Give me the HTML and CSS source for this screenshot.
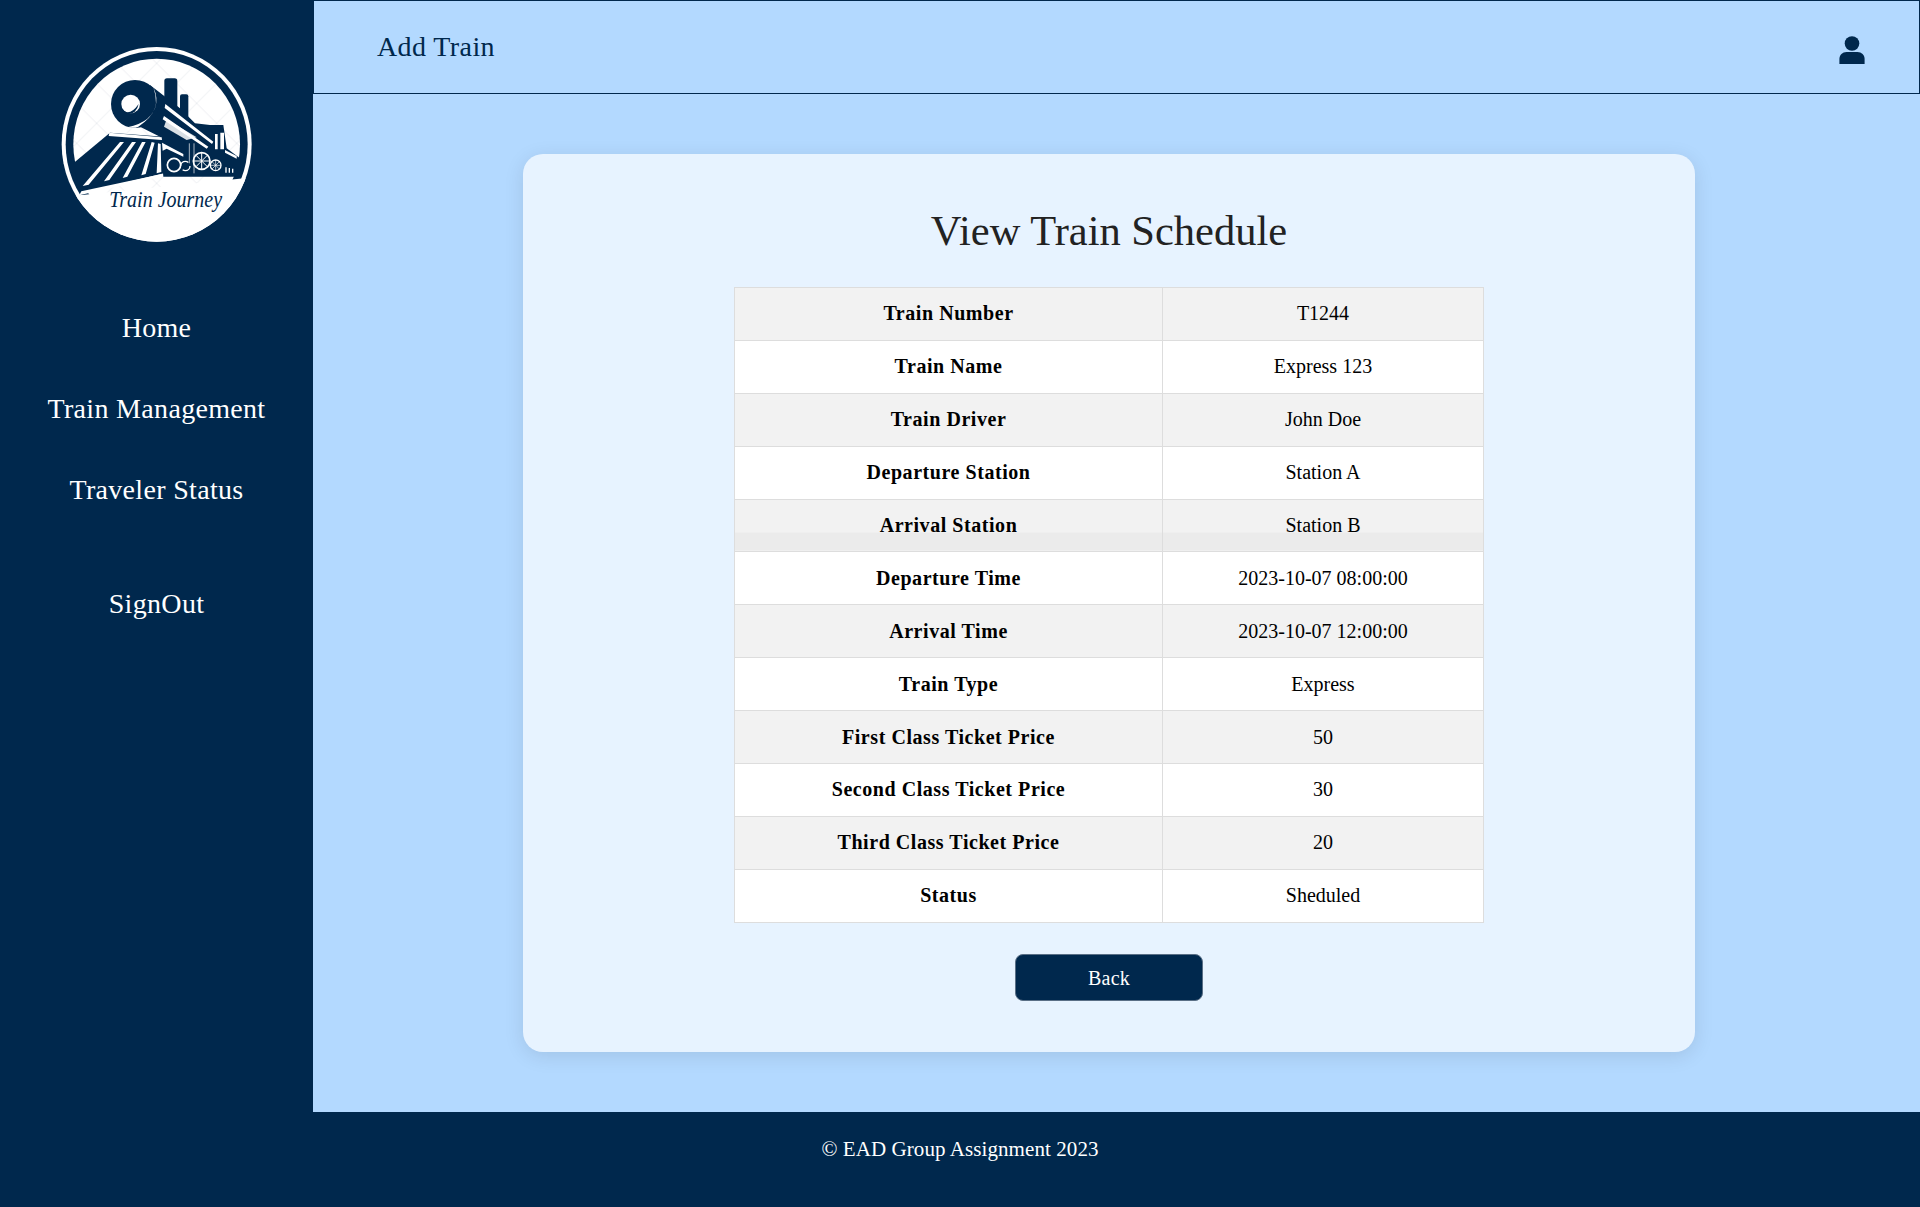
FILE: index.html
```html
<!DOCTYPE html>
<html lang="en">
<head>
<meta charset="utf-8">
<title>View Train Schedule</title>
<link rel="stylesheet" href="styles.css">
</head>
<body>
<div class="app">
  <aside class="sidebar">
    <svg class="logo" viewBox="0 0 690 690" width="230" height="230" aria-label="Train Journey logo">
      <defs>
        <pattern id="wm" width="120" height="120" patternUnits="userSpaceOnUse" patternTransform="translate(50 40)">
          <path d="M0 0L120 120M120 0L0 120" stroke="#e3e6ea" stroke-width="2" fill="none"/>
        </pattern>
        <clipPath id="disc"><ellipse cx="350" cy="343" rx="285" ry="292"/></clipPath>
      </defs>
      <ellipse cx="350" cy="343" rx="285" ry="292" fill="#fff"/>
      <ellipse cx="350" cy="343" rx="273" ry="280" fill="#00284d"/>
      <ellipse cx="350" cy="343" rx="250" ry="257" fill="#fff"/>
      <ellipse cx="350" cy="343" rx="250" ry="257" fill="url(#wm)"/>
      <path d="M100 400L210 308L372 320L372 430L122 490Z" fill="#00284d"/>
      <rect x="373" y="145" width="39" height="110" rx="8" fill="#00284d"/>
      <rect x="420" y="193" width="25" height="80" rx="6" fill="#00284d"/>
      <path d="M330 165L420 235L465 280L510 285L550 285L560 355L600 385L605 440L370 440L360 320L300 290Z" fill="#00284d"/>
      <circle cx="285" cy="222" r="72" fill="#00284d"/>
      <circle cx="272" cy="222" r="28" fill="#fff"/>
      <path d="M246 238Q268 262 296 222Q290 252 262 252Q250 250 246 238Z" fill="#00284d"/>
      <path d="M340 172Q372 240 295 290Q282 296 262 292Q340 276 348 220Q348 194 340 172Z" fill="#fff"/>
      <path d="M376 222L520 335L516 342L374 234Z M372 258L505 350L500 356L368 268Z" fill="#fff"/>
      <path d="M380 268L470 322L440 330L372 290Z" fill="#fff" opacity=".85"/>
      <path d="M525 312h8v46h-8Z M541 308h11v50h-11Z" fill="#fff"/>
      <path d="M555 360L590 378L590 386L555 368Z" fill="#fff"/>
      <path d="M208 308L365 322L366 330L206 318Z" fill="#fff"/>
      <path d="M240 336L252 336L146 464L128 468Z M276 336L288 336L208 450L192 454Z M306 336L317 336L262 440L248 444Z M335 336L344 338L317 432L304 436Z M354 340L362 342L364 426L350 430Z" fill="#fff"/>
      <path d="M366 432L368 438L118 496L124 484Z" fill="#fff"/>
      <path d="M366 338L430 372L430 380L380 356L368 362Z" fill="#fff"/>
      <circle cx="402" cy="405" r="20" fill="none" stroke="#fff" stroke-width="5"/>
      <circle cx="436" cy="408" r="14" fill="none" stroke="#fff" stroke-width="4" stroke-dasharray="30 14"/>
      <circle cx="485" cy="393" r="25" fill="#00284d" stroke="#fff" stroke-width="5"/>
      <path d="M485 369V417M461 393H509M468 376L502 410M502 376L468 410" stroke="#fff" stroke-width="3"/>
      <circle cx="527" cy="406" r="16" fill="#00284d" stroke="#fff" stroke-width="4"/>
      <path d="M527 390V422M511 406H543M516 395L538 417M538 395L516 417" stroke="#fff" stroke-width="2"/>
      <path d="M558 412v16M568 414v14M578 416v12" stroke="#fff" stroke-width="4"/>
      <path d="M462 340v90M448 340v60" stroke="#fff" stroke-width="2"/>
      <path d="M100 492L118 496L620 444L660 444L660 660L60 660L60 480Z" fill="#fff" clip-path="url(#disc)"/>
      <text x="208" y="530" class="logo-text" textLength="338" lengthAdjust="spacingAndGlyphs">Train Journey</text>
    </svg>
    <nav class="nav">
      <a class="nav-link">Home</a>
      <a class="nav-link">Train Management</a>
      <a class="nav-link">Traveler Status</a>
      <a class="nav-link nav-signout">SignOut</a>
    </nav>
  </aside>
  <div class="main">
    <header class="topbar">
      <span class="topbar-title">Add Train</span>
      <svg class="user-icon" viewBox="0 0 26 28" width="26" height="28" aria-label="User"><circle cx="13" cy="7.5" r="7.3" fill="#00284d"/><path d="M0.4 28V23C0.4 19 3.5 16 7.5 16H18.5C22.5 16 25.6 19 25.6 23V28Z" fill="#00284d"/></svg>
    </header>
    <main class="content">
      <section class="card">
        <h1 class="card-title">View Train Schedule</h1>
        <table class="schedule">
          <tbody>
            <tr><th>Train Number</th><td>T1244</td></tr>
            <tr><th>Train Name</th><td>Express 123</td></tr>
            <tr><th>Train Driver</th><td>John Doe</td></tr>
            <tr><th>Departure Station</th><td>Station A</td></tr>
            <tr class="row-strip"><th>Arrival Station</th><td>Station B</td></tr>
            <tr><th>Departure Time</th><td>2023-10-07 08:00:00</td></tr>
            <tr><th>Arrival Time</th><td>2023-10-07 12:00:00</td></tr>
            <tr><th>Train Type</th><td>Express</td></tr>
            <tr><th>First Class Ticket Price</th><td>50</td></tr>
            <tr><th>Second Class Ticket Price</th><td>30</td></tr>
            <tr><th>Third Class Ticket Price</th><td>20</td></tr>
            <tr><th>Status</th><td>Sheduled</td></tr>
          </tbody>
        </table>
        <button class="back-btn" type="button">Back</button>
      </section>
    </main>
  </div>
</div>
<footer class="footer">© EAD Group Assignment 2023</footer>
</body>
</html>
```
FILE: styles.css
```css
* { box-sizing: border-box; }
html, body { margin: 0; height: 100%; }
body {
  font-family: "Liberation Serif", "Times New Roman", serif;
  background: #b3d9ff;
  color: #000;
  height: 1207px;
  display: flex;
  flex-direction: column;
  overflow: hidden;
}
.app { display: flex; flex: 1; min-height: 0; }
.sidebar {
  width: 313px;
  flex: none;
  background: #00284d;
  display: flex;
  flex-direction: column;
  align-items: center;
  padding-top: 30px;
}
.logo { display: block; align-self: flex-start; margin-left: 40px; }
.logo-text {
  font-family: "Liberation Serif", serif;
  font-style: italic;
  font-size: 72px;
  fill: #00284d;
}
.nav { display: flex; flex-direction: column; align-items: center; margin-top: 27px; width: 100%; }
.nav-link {
  color: #fff;
  font-size: 28px;
  line-height: 32px;
  padding: 24.5px 0;
  letter-spacing: 0.32px;
}
.nav-signout { margin-top: 33px; }
.main { flex: 1; min-width: 0; display: flex; flex-direction: column; }
.topbar {
  height: 94px;
  flex: none;
  border: 1px solid #00284d;
  display: flex;
  align-items: center;
  justify-content: space-between;
  padding: 0 54px 0 63px;
}
.topbar-title { font-size: 28px; color: #00284d; letter-spacing: 0.4px; }
.user-icon { display: block; margin-top: 6px; }
.content { flex: 1; display: flex; justify-content: center; padding: 60px 15px 0 0; }
.card {
  width: 1172px;
  height: 898px;
  background: #e7f3ff;
  border-radius: 20px;
  box-shadow: 0 4px 20px rgba(0, 0, 0, 0.1);
  display: flex;
  flex-direction: column;
  align-items: center;
  padding-top: 52px;
}
.card-title {
  margin: 0 0 31px;
  font-size: 42.5px;
  line-height: 50px;
  font-weight: 400;
  color: #222;
}
.schedule { width: 750px; border-collapse: collapse; font-size: 20px; background: #fff; }
.schedule th, .schedule td {
  border: 1px solid #ddd;
  height: 52.9px;
  padding: 0 8px;
  text-align: center;
}
.schedule th { width: 428px; font-weight: 700; letter-spacing: 0.55px; }
.schedule tr:nth-child(odd) th, .schedule tr:nth-child(odd) td { background: #f2f2f2; }
.schedule tr.row-strip th, .schedule tr.row-strip td {
  background: linear-gradient(#f2f2f2 0 33px, #ebebeb 33px);
}
.back-btn {
  margin-top: 31px;
  width: 188px;
  height: 47px;
  padding: 2px 0 0;
  background: #00284d;
  color: #fff;
  border: 1px solid #5a6f86;
  border-radius: 8px;
  font-family: inherit;
  font-size: 20px;
  letter-spacing: 0.2px;
}
.footer {
  height: 95px;
  flex: none;
  background: #00284d;
  color: #fff;
  font-size: 21px;
  letter-spacing: 0.08px;
  display: flex;
  align-items: center;
  justify-content: center;
  padding-bottom: 20px;
}
```
